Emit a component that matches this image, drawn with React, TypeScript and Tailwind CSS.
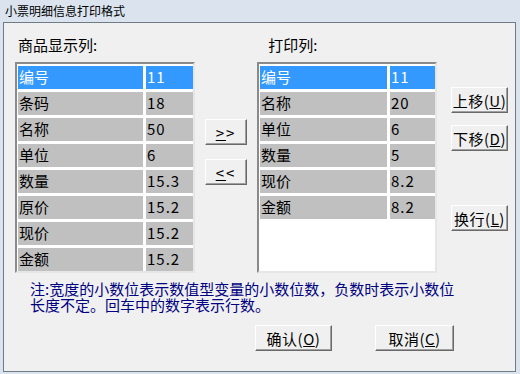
import React from 'react';

const FONT = '"Noto Sans CJK SC", "Noto Sans", sans-serif';

type Row = { name: string; width: string };

const SHOW_COLS: Row[] = [
  { name: '编号', width: '11' },
  { name: '条码', width: '18' },
  { name: '名称', width: '50' },
  { name: '单位', width: '6' },
  { name: '数量', width: '15.3' },
  { name: '原价', width: '15.2' },
  { name: '现价', width: '15.2' },
  { name: '金额', width: '15.2' },
];

const PRINT_COLS: Row[] = [
  { name: '编号', width: '11' },
  { name: '名称', width: '20' },
  { name: '单位', width: '6' },
  { name: '数量', width: '5' },
  { name: '现价', width: '8.2' },
  { name: '金额', width: '8.2' },
];

// classic raised win32 button
function WinButton({ children, className = '' }: { children: React.ReactNode; className?: string }) {
  return (
    <button
      type="button"
      className={`flex items-center justify-center bg-[#f0f0f0] border border-t-white border-l-white border-r-[#696969] border-b-[#696969] shadow-[inset_-1px_-1px_0_#a0a0a0] text-[15px] leading-[17px] tracking-[0.5px] text-black ${className}`}
    >
      {children}
    </button>
  );
}

function ColumnList({ rows, nameW, valW }: { rows: Row[]; nameW: string; valW: string }) {
  return (
    <div className="w-[180px] h-[211px] border-2 border-t-[#8a8a8a] border-l-[#8a8a8a] border-r-[#e6e6e6] border-b-[#e6e6e6] bg-white pt-[2px] pl-[1px] flex flex-col gap-[3px]">
      {rows.map((r, i) => {
        const cell = i === 0 ? 'bg-[#3399ff] text-white' : 'bg-[#c0c0c0] text-black';
        return (
          <div key={r.name} className="flex gap-[3px] h-[23px] shrink-0">
            <div className={`${nameW} ${cell} pl-[1px] text-[15px] leading-[21px]`}>{r.name}</div>
            <div className={`${valW} ${cell} pl-[1px] text-[15px] leading-[21px] tracking-[1px]`}>{r.width}</div>
          </div>
        );
      })}
    </div>
  );
}

export default function App() {
  return (
    <div className="w-[520px] h-[374px] bg-[#dbe4ee] overflow-hidden" style={{ fontFamily: FONT }}>
      {/* title bar */}
      <div className="h-[22px] pl-[5px] flex items-center text-[12px] leading-[14px] text-black">
        小票明细信息打印格式
      </div>

      {/* client area */}
      <div className="ml-[3px] w-[513px] h-[350px] border border-[#6f7b87] bg-[#f0f0f0]">
        <div className="flex mt-[13px] h-[17px] text-[15px] leading-[17px] text-black">
          <span className="ml-[14px]">商品显示列:</span>
          <span className="ml-[171px]">打印列:</span>
        </div>

        <div className="flex mt-[9px] pl-[11px]">
          <ColumnList rows={SHOW_COLS} nameW="w-[125px]" valW="w-[47px]" />

          <div className="ml-[10px] w-[42px] flex flex-col">
            <WinButton className="mt-[57px] h-[26px] w-[42px] tracking-[2px]">
              <span className="underline">&gt;</span>&gt;
            </WinButton>
            <WinButton className="mt-[14px] h-[26px] w-[42px] tracking-[2px]">
              <span className="underline">&lt;</span>&lt;
            </WinButton>
          </div>

          <div className="ml-[10px]">
            <ColumnList rows={PRINT_COLS} nameW="w-[127px]" valW="w-[45px]" />
          </div>

          <div className="ml-[14px] w-[57px] flex flex-col">
            <WinButton className="mt-[25px] h-[26px] w-[57px]">
              上移(<span className="underline">U</span>)
            </WinButton>
            <WinButton className="mt-[12px] h-[26px] w-[57px]">
              下移(<span className="underline">D</span>)
            </WinButton>
            <WinButton className="mt-[54px] h-[26px] w-[57px]">
              换行(<span className="underline">L</span>)
            </WinButton>
          </div>
        </div>

        <p className="mt-[8px] pl-[26px] text-[15px] leading-[16px] text-[#000080]">
          注:宽度的小数位表示数值型变量的小数位数，负数时表示小数位
          <br />
          长度不定。回车中的数字表示行数。
        </p>

        <div className="flex mt-[12px] pl-[251px] gap-[43px]">
          <WinButton className="h-[26px] w-[77px]">
            确认(<span className="underline">O</span>)
          </WinButton>
          <WinButton className="h-[26px] w-[79px]">
            取消(<span className="underline">C</span>)
          </WinButton>
        </div>
      </div>
    </div>
  );
}
